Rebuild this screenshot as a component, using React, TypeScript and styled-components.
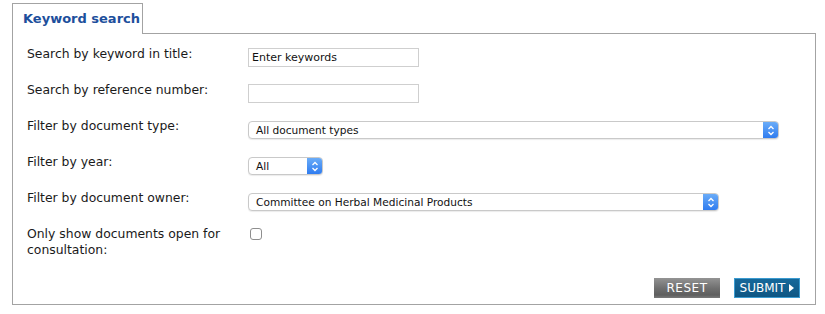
import {FC} from 'react'
import styled, {createGlobalStyle} from 'styled-components'

const GlobalStyle = createGlobalStyle`
  html, body {
    margin: 0;
    padding: 0;
    background: #fff;
  }
  body {
    font-family: 'DejaVu Sans', Verdana, sans-serif;
    color: #111;
  }
`

const rows = [
  {label: 'Search by keyword in title:', kind: 'text', value: 'Enter keywords'},
  {label: 'Search by reference number:', kind: 'text', value: ''},
  {label: 'Filter by document type:', kind: 'select', value: 'All document types', width: 531},
  {label: 'Filter by year:', kind: 'select', value: 'All', width: 75},
  {label: 'Filter by document owner:', kind: 'select', value: 'Committee on Herbal Medicinal Products', width: 471},
  {label: 'Only show documents open for consultation:', kind: 'check', value: ''}
]

const App: FC = () => {
  return (
    <Page>
      <GlobalStyle />
      <TabRow>
        <Tab>Keyword search</Tab>
        <TabFiller />
      </TabRow>
      <Panel>
        <Form>
          {rows.map(row => (
            <Row key={row.label}>
              <Label>{row.label}</Label>
              <Field>
                {row.kind === 'text' && <TextBox>{row.value}</TextBox>}
                {row.kind === 'select' && (
                  <Select $width={row.width ?? 100}>
                    <SelectText>{row.value}</SelectText>
                    <SelectArrow>
                      <svg width="8" height="11" viewBox="0 0 8 11">
                        <path d="M1.5 4 L4 1.5 L6.5 4 M1.5 7 L4 9.5 L6.5 7" fill="none" stroke="#fff" strokeWidth="1.3" />
                      </svg>
                    </SelectArrow>
                  </Select>
                )}
                {row.kind === 'check' && <CheckBox />}
              </Field>
            </Row>
          ))}
        </Form>
        <Actions>
          <ResetButton>RESET</ResetButton>
          <SubmitButton>
            SUBMIT
            <svg width="5" height="8" viewBox="0 0 5 8">
              <path d="M0 0 L5 4 L0 8 Z" fill="#fff" />
            </svg>
          </SubmitButton>
        </Actions>
      </Panel>
    </Page>
  )
}

const Page = styled.div`
  width: 804px;
  padding: 3px 0 0 12px;
`

const TabRow = styled.div`
  display: flex;
  height: 31px;
`

const Tab = styled.div`
  width: 131px;
  box-sizing: border-box;
  border: 1px solid #a3a3a3;
  border-bottom: none;
  display: flex;
  align-items: center;
  padding: 0 0 1px 10px;
  font-size: 13px;
  font-weight: bold;
  color: #1d4f9c;
`

const TabFiller = styled.div`
  flex: 1;
  border-bottom: 1px solid #a3a3a3;
`

const Panel = styled.div`
  height: 271px;
  box-sizing: border-box;
  border: 1px solid #a3a3a3;
  border-top: none;
  display: flex;
  flex-direction: column;
  justify-content: space-between;
`

const Form = styled.div`
  display: flex;
  flex-direction: column;
  padding: 12px 0 0 14px;
`

const Row = styled.div`
  display: grid;
  grid-template-columns: 221px 1fr;
  height: 36px;
`

const Label = styled.div`
  font-size: 12.4px;
  line-height: 16px;
  color: #1a1a1a;
  width: 212px;
`

const Field = styled.div`
  display: flex;
  align-items: flex-start;
  padding-top: 2px;
`

const TextBox = styled.div`
  width: 171px;
  height: 19px;
  box-sizing: border-box;
  border: 1px solid #cfcfcf;
  font-family: 'DejaVu Sans', Tahoma, sans-serif;
  font-size: 11px;
  line-height: 17px;
  padding-left: 3px;
  color: #111;
`

const Select = styled.div<{$width: number}>`
  width: ${p => p.$width}px;
  height: 18px;
  margin-top: 1px;
  box-sizing: border-box;
  border: 1px solid #c9c9c9;
  border-radius: 4px;
  box-shadow: 0 1px 1px rgba(0, 0, 0, 0.08);
  display: flex;
  align-items: stretch;
  overflow: hidden;
  background: #fff;
`

const SelectText = styled.div`
  flex: 1;
  font-family: 'DejaVu Sans', 'Lucida Grande', sans-serif;
  font-size: 10.6px;
  line-height: 16px;
  padding-left: 7px;
  color: #111;
`

const SelectArrow = styled.div`
  width: 15px;
  background: linear-gradient(#6aacf8, #2f7cf0);
  display: flex;
  align-items: center;
  justify-content: center;
`

const CheckBox = styled.div`
  width: 12px;
  height: 12px;
  box-sizing: border-box;
  border: 1px solid #8e8e8e;
  border-radius: 3px;
  margin: 0 0 0 2px;
  background: #fff;
`

const Actions = styled.div`
  display: flex;
  justify-content: flex-end;
  gap: 14px;
  padding: 0 15px 6px 0;
`

const ButtonBase = styled.div`
  height: 20px;
  width: 66px;
  box-sizing: border-box;
  display: flex;
  align-items: center;
  justify-content: center;
  gap: 4px;
  font-family: 'DejaVu Sans', Verdana, sans-serif;
  font-size: 12px;
  color: #fff;
`

const ResetButton = styled(ButtonBase)`
  background: linear-gradient(#939393, #707070 50%, #5e5e5e 85%, #7a7a7a);
  letter-spacing: 0.5px;
`

const SubmitButton = styled(ButtonBase)`
  background: linear-gradient(#16689a, #0e5683);
  border: 1px solid #3b9bd0;
`

export default App
